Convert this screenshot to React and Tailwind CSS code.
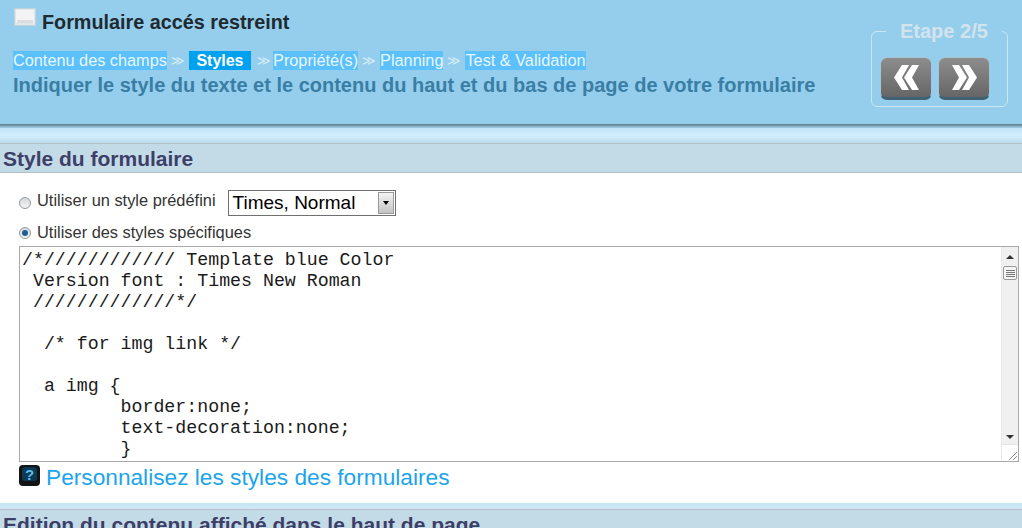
const cssLines = [
  '/*//////////// Template blue Color',
  ' Version font : Times New Roman',
  ' /////////////*/',
  '',
  '  /* for img link */',
  '',
  '  a img {',
  '         border:none;',
  '         text-decoration:none;',
  '         }',
]

const steps = [
  { label: 'Contenu des champs' },
  { label: 'Styles', active: true },
  { label: 'Propriété(s)' },
  { label: 'Planning' },
  { label: 'Test & Validation' },
]

function Breadcrumb() {
  return (
    <div className="flex h-[19px] items-center text-[16.3px] leading-[19px] text-[#e8f7ff]">
      {steps.map((step, i) => (
        <span key={step.label} className="flex items-center">
          {i > 0 && (
            <span className={`text-[13px] text-[#d5edf9] ${steps[i - 1].active ? 'pl-[6px] pr-[2px]' : 'px-[4px]'}`}>≫</span>
          )}
          {step.active ? (
            <span className="bg-[#00a2f0] px-[7.5px] text-[16px] font-bold text-white">{step.label}</span>
          ) : (
            <span className="bg-[#5cc0fb]">{step.label}</span>
          )}
        </span>
      ))}
    </div>
  )
}

function NavButton({ children }) {
  return (
    <button
      type="button"
      className="flex h-[43px] w-[52px] items-center justify-center rounded-[7px] border border-[#a6c6d6] border-b-[3px] border-b-[#3f6274] bg-gradient-to-b from-[#8d8d8d] to-[#666666]"
    >
      {children}
    </button>
  )
}

function DoubleArrow({ flip }) {
  return (
    <svg width="25" height="25" viewBox="0 0 25 25" className={flip ? '-scale-x-100' : ''}>
      <path d="M0 0 H7 L15 12.5 L7 25 H0 L7 12.5 Z" fill="#ffffff" />
      <path d="M10 0 H17 L25 12.5 L17 25 H10 L17 12.5 Z" fill="#ffffff" />
    </svg>
  )
}

function SectionTitle({ children }) {
  return (
    <h2 className="h-[30px] overflow-hidden border-y border-[#b4bec4] bg-[#c3dbe7] pl-[3px] text-[21px] leading-[30px] font-bold text-[#3e3f68]">
      {children}
    </h2>
  )
}

function Radio({ checked }) {
  return (
    <span className="mr-[6px] flex h-[12px] w-[12px] items-center justify-center rounded-full border border-[#8e9aa3] bg-gradient-to-b from-[#d8d8d8] to-[#f4f4f4]">
      {checked && <span className="h-[6px] w-[6px] rounded-full bg-[#1c5f96]" />}
    </span>
  )
}

function Band() {
  return (
    <div>
      <div className="h-[4px] bg-gradient-to-b from-[#5b7a8b] to-[#a9d3e9]" />
      <div className="h-[15px] bg-gradient-to-b from-[#bfe3f6] via-[#d2eefd] to-[#bcdcec]" />
    </div>
  )
}

export default function App() {
  return (
    <div className="h-[528px] w-[1022px] overflow-hidden bg-white font-['Liberation_Sans',Arial,sans-serif]">
      <header className="flex h-[124px] justify-between bg-[#94ceec]">
        <div className="pt-[8px] pl-[13px]">
          <div className="flex h-[31px] items-start">
            <svg width="22" height="18" viewBox="0 0 22 18" className="mr-[6px] ml-[1px]">
              <rect x="0.5" y="0.5" width="21" height="17" fill="#dfe6ea" stroke="#c3d3db" />
              <rect x="2" y="2" width="18" height="13" fill="#f3f3f3" />
              <rect x="3" y="12" width="16" height="3" fill="#dddddd" />
            </svg>
            <h1 className="pt-[3px] text-[19.8px] leading-[22px] font-bold text-[#1f2a30]">Formulaire accés restreint</h1>
          </div>
          <div className="mt-[12px]">
            <Breadcrumb />
          </div>
          <p className="mt-[3px] text-[20px] leading-[24px] font-bold text-[#3a7ea5]">
            Indiquer le style du texte et le contenu du haut et du bas de page de votre formulaire
          </p>
        </div>
        <fieldset className="mt-[19px] mr-[14px] h-[88px] w-[137px] rounded-[6px] border border-[#cde5f1] pl-[8px]">
          <legend className="ml-[6px] px-[14px] text-[20px] leading-[24px] font-bold text-[#d3e3ec]">Etape 2/5</legend>
          <div className="mt-[14px] flex gap-[6px]">
            <NavButton><DoubleArrow flip /></NavButton>
            <NavButton><DoubleArrow /></NavButton>
          </div>
        </fieldset>
      </header>
      <Band />
      <SectionTitle>Style du formulaire</SectionTitle>
      <section className="h-[330px] pt-[17px] pl-[19px] text-[#333333]">
        <div className="flex h-[32px] items-start">
          <div className="flex h-[22px] items-center text-[16.4px]">
            <span className="mt-[3px]"><Radio /></span>
            <span className="-mt-[2px]">Utiliser un style prédéfini</span>
          </div>
          <div className="ml-[12px] flex h-[26px] w-[168px] items-center justify-between border border-[#707070] pr-[1px] pl-[4px] text-[19px] text-black">
            <span>Times, Normal</span>
            <span className="flex h-[22px] w-[16px] items-center justify-center border border-[#9a9a9a] bg-gradient-to-b from-[#f4f4f4] to-[#c4c4c4]">
              <span className="h-0 w-0 border-x-[3px] border-t-[4px] border-x-transparent border-t-black" />
            </span>
          </div>
        </div>
        <div className="flex h-[24px] items-start text-[16.4px] leading-[20px]">
          <span className="mt-[5px]"><Radio checked /></span>
          <span>Utiliser des styles spécifiques</span>
        </div>
        <div className="flex h-[216px] w-[1000px] border border-[#a9a9a9]">
          <pre className="flex-1 overflow-hidden pt-[3px] pl-[2px] font-['Liberation_Mono',monospace] text-[18.25px] leading-[21px] text-[#1a1a1a]">
            {cssLines.join('\n')}
          </pre>
          <div className="flex w-[17px] flex-col border-l border-[#e8e8e8] bg-[#f0f0f0]">
            <div className="flex h-[19px] items-center justify-center">
              <span className="h-0 w-0 border-x-[4px] border-b-[4px] border-x-transparent border-b-[#333333]" />
            </div>
            <div className="mx-[1px] flex h-[14px] flex-col items-center justify-center gap-[1px] rounded-[2px] border border-[#9a9a9a] bg-[#f4f4f4]">
              <span className="h-px w-[9px] bg-[#777777]" />
              <span className="h-px w-[9px] bg-[#777777]" />
              <span className="h-px w-[9px] bg-[#777777]" />
              <span className="h-px w-[9px] bg-[#777777]" />
            </div>
            <div className="flex-1" />
            <div className="flex h-[14px] items-center justify-center">
              <span className="h-0 w-0 border-x-[4px] border-t-[4px] border-x-transparent border-t-[#333333]" />
            </div>
            <div className="flex h-[17px] items-end justify-end border-t border-[#e4e4e4] bg-white">
              <svg width="12" height="12" viewBox="0 0 12 12">
                <path d="M11 3 L3 11 M11 7 L7 11" stroke="#8a8a8a" fill="none" />
              </svg>
            </div>
          </div>
        </div>
        <div className="mt-[3px] flex items-start">
          <svg width="21" height="21" viewBox="0 0 21 21" className="shrink-0">
            <rect width="21" height="21" rx="4" fill="#141414" />
            <rect x="3" y="2" width="15" height="14" rx="3" fill="#0c3a55" />
            <text x="10.5" y="15" textAnchor="middle" fontSize="15" fontWeight="700" fill="#5cbcec" fontFamily="Liberation Sans">?</text>
          </svg>
          <a className="ml-[6px] text-[22.7px] leading-[24px] text-[#1ca4ec]">Personnalisez les styles des formulaires</a>
        </div>
      </section>
      <div className="h-[6px] bg-gradient-to-b from-[#c4e6f7] to-[#cfe9f6]" />
      <SectionTitle>Edition du contenu affiché dans le haut de page</SectionTitle>
    </div>
  )
}
